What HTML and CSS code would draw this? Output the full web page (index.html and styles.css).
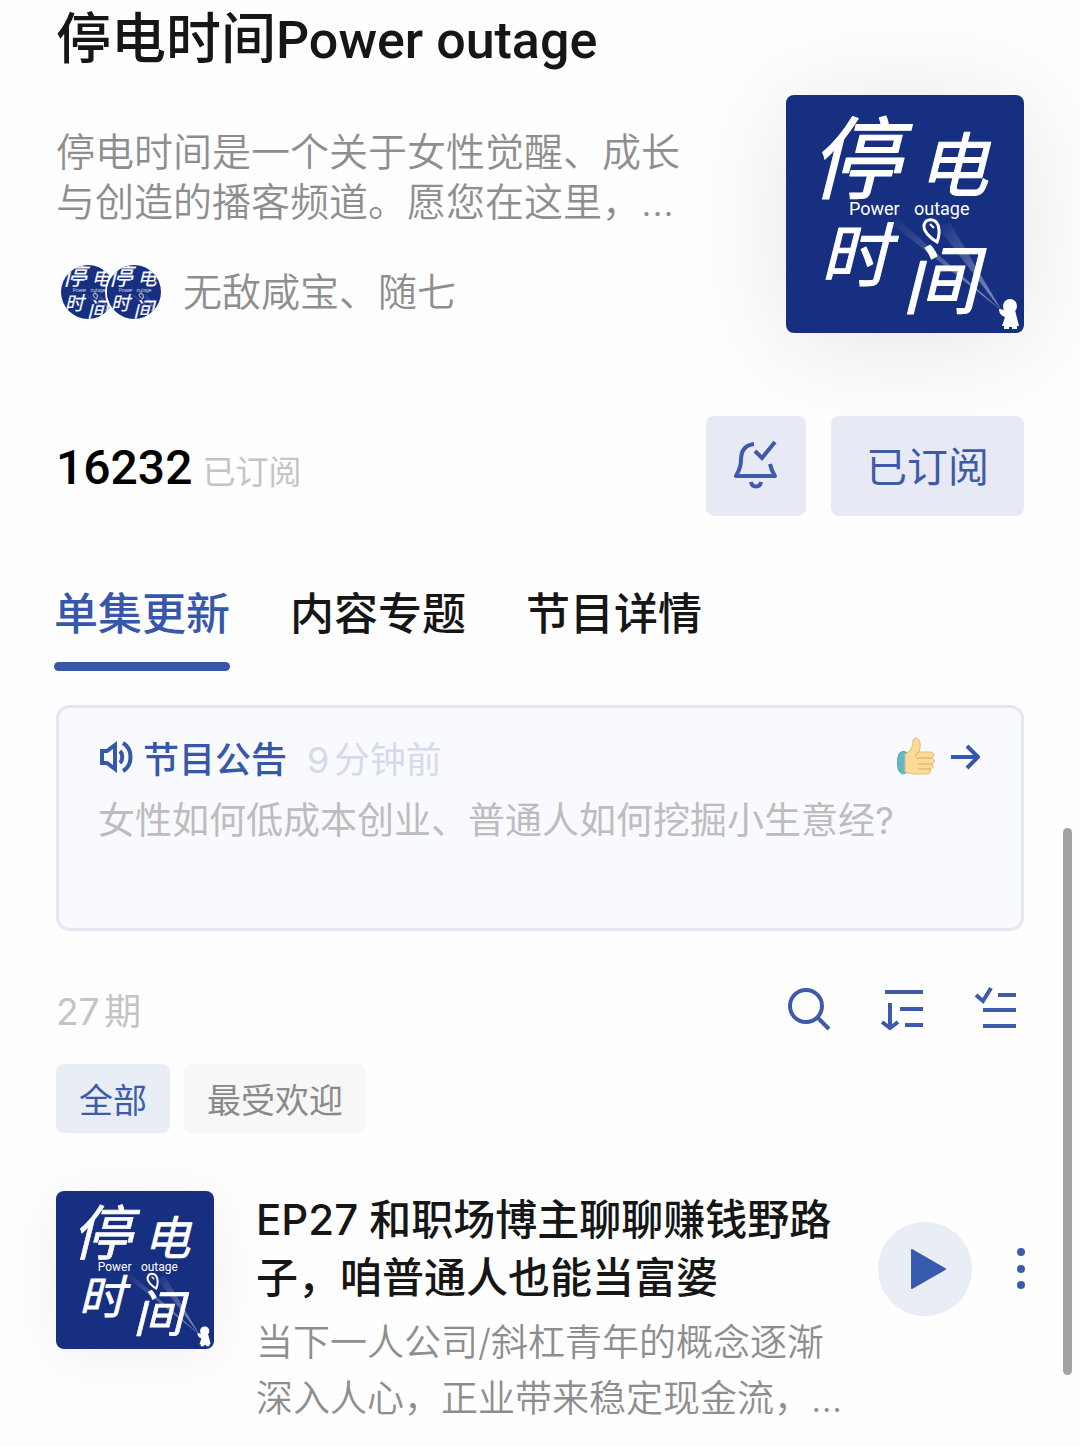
FILE: index.html
```
<!DOCTYPE html>
<html lang="zh-CN">
<head>
    <meta charset="UTF-8">
    <meta name="viewport" content="width=device-width, initial-scale=1.0">
    <title>停电时间Power outage</title>
    <link rel="stylesheet" href="styles.css">
</head>
<body>

<!-- Artwork shared by the cover, the avatars and the episode list -->
<svg class="defs" width="0" height="0" aria-hidden="true">
    <defs>
        <linearGradient id="beam-light" x1="1" y1="1" x2="0" y2="0">
            <stop offset="0" stop-color="#fff" stop-opacity="0.5"/>
            <stop offset="1" stop-color="#fff" stop-opacity="0"/>
        </linearGradient>
        <symbol id="artwork" viewBox="0 0 238 238">
            <rect width="238" height="238" fill="#172f80"/>
            <path d="M216 216L102 126L112 124Z" fill="url(#beam-light)"/>
            <path d="M216 216L150 130L164 128Z" fill="url(#beam-light)"/>
            <g class="art-text">
                <text x="24" y="97" font-size="90">停</text>
                <text x="132" y="96" font-size="70">电</text>
                <text x="34" y="186" font-size="70">时</text>
                <text x="116" y="213" font-size="76">间</text>
            </g>
            <g class="art-sub">
                <text x="63" y="120" font-size="18">Power</text>
                <text x="128" y="120" font-size="18">outage</text>
            </g>
            <path d="M151 147C144 143 137 136 138 130C140 123 149 123 152 130C154 136 153 142 151 147Z" fill="#172f80" stroke="#fff" stroke-width="3"/>
            <path d="M144 129L148 133" stroke="#fff" stroke-width="2"/>
            <circle cx="224" cy="211" r="7" fill="#fff"/>
            <path d="M219 215L213 214C213 219 216 221 219 222L216 231H218V234H223V232H226V234H231V231H233L229 215Z" fill="#fff"/>
        </symbol>
    </defs>
</svg>

<main class="page">
    <header class="podcast">
        <h1 class="podcast-title">停电时间<span>Power outage</span></h1>
        <div class="podcast-row">
            <div class="podcast-info">
                <p class="podcast-desc">停电时间是一个关于女性觉醒、成长<br>与创造的播客频道。愿您在这里，…</p>
                <div class="hosts">
                    <div class="avatars">
                        <svg class="avatar" viewBox="20 22 198 198"><use href="#artwork" width="238" height="238"/></svg>
                        <svg class="avatar" viewBox="20 22 198 198"><use href="#artwork" width="238" height="238"/></svg>
                    </div>
                    <span>无敌咸宝、随七</span>
                </div>
            </div>
            <svg class="cover" role="img" aria-label="停电时间"><use href="#artwork"/></svg>
        </div>
    </header>

    <section class="subscribe">
        <div class="count"><strong>16232</strong><span>已订阅</span></div>
        <button class="btn btn-bell" type="button" aria-label="更新提醒">
            <svg width="48" height="52" viewBox="0 0 48 52" fill="none" stroke="#3e5ba9" stroke-width="4">
                <path d="M22 4C13 5 9 11 9 20C9 28 6 32 4 36H43C41 33 39 29 38 24" stroke-linejoin="round"/>
                <path d="M23 11L30 18L43 2"/>
                <path d="M19 42C20 48 28 48 29 42"/>
            </svg>
        </button>
        <button class="btn btn-sub" type="button">已订阅</button>
    </section>

    <nav class="tabs">
        <a class="tab active" href="#">单集更新</a>
        <a class="tab" href="#">内容专题</a>
        <a class="tab" href="#">节目详情</a>
    </nav>

    <section class="notice">
        <div class="notice-head">
            <svg class="speaker" width="36" height="36" viewBox="0 0 36 36" fill="none" stroke="#3657ab" stroke-width="4">
                <path d="M4 12H9L17 6V30L9 24H4Z"/>
                <path d="M22 12C25 15 25 21 22 24"/>
                <path d="M25 4C35 10 35 26 25 32"/>
            </svg>
            <h2 class="notice-title">节目公告</h2>
            <span class="notice-time">9分钟前</span>
            <svg class="thumb" width="40" height="40" viewBox="0 0 40 40">
                <path d="M3 17C5 14 9 14 11 16V35C8 38 5 37 3 34C1 29 1 22 3 17Z" fill="#62b8c8" stroke="#4fa0b2"/>
                <path d="M9 17C14 15 17 10 17 4C17 1 21 0 23 3C25 7 24 11 23 15H34C38 15 39 19 36 21C39 22 39 26 36 27C38 29 37 32 34 32C35 35 34 37 30 37H18C14 37 11 35 9 35Z" fill="#fbdc97" stroke="#e2b873"/>
                <path d="M23 15C19 17 19 20 22 22M22 21H36M22 27H36M22 32H34" fill="none" stroke="#dda75c"/>
            </svg>
            <a class="notice-link" href="#" aria-label="查看公告">
                <svg width="32" height="28" viewBox="0 0 32 28" fill="none" stroke="#3657ab" stroke-width="4">
                    <path d="M1 14H28"/>
                    <path d="M17 3L28 14L17 25" stroke-linejoin="round"/>
                </svg>
            </a>
        </div>
        <p class="notice-text">女性如何低成本创业、普通人如何挖掘小生意经?</p>
    </section>

    <div class="toolbar">
        <span class="total">27期</span>
        <button class="icon-btn" type="button" aria-label="搜索">
            <svg width="48" height="48" viewBox="0 0 48 48" fill="none" stroke="#3e5ba9" stroke-width="4">
                <circle cx="22" cy="21" r="16"/>
                <path d="M33 32L45 44"/>
            </svg>
        </button>
        <button class="icon-btn" type="button" aria-label="排序">
            <svg width="48" height="48" viewBox="0 0 48 48" fill="none" stroke="#3e5ba9" stroke-width="4">
                <path d="M7 7H45M22 24H45M27 40H45"/>
                <path d="M12 18V43M4 37L12 43L20 37"/>
            </svg>
        </button>
        <button class="icon-btn" type="button" aria-label="批量选择">
            <svg width="48" height="48" viewBox="0 0 48 48" fill="none" stroke="#3e5ba9" stroke-width="4">
                <path d="M4 10L11 16L19 3"/>
                <path d="M26 10H44M11 25H44M11 41H44"/>
            </svg>
        </button>
    </div>

    <div class="filters">
        <button class="chip active" type="button">全部</button>
        <button class="chip" type="button">最受欢迎</button>
    </div>

    <article class="episode">
        <svg class="episode-cover" role="img" aria-label="停电时间"><use href="#artwork"/></svg>
        <div class="episode-body">
            <h3 class="episode-title">EP27 和职场博主聊聊赚钱野路<br>子，咱普通人也能当富婆</h3>
            <p class="episode-desc">当下一人公司/斜杠青年的概念逐渐<br>深入人心，正业带来稳定现金流，…</p>
        </div>
        <button class="play" type="button" aria-label="播放">
            <svg width="38" height="42" viewBox="0 0 38 42"><path d="M3 2L36 21L3 40Z" fill="#3759ae" stroke="#3759ae" stroke-width="2" stroke-linejoin="round"/></svg>
        </button>
        <button class="more" type="button" aria-label="更多">
            <svg width="10" height="42" viewBox="0 0 10 42" fill="#3e5ba9">
                <circle cx="5" cy="4" r="4"/>
                <circle cx="5" cy="21" r="4"/>
                <circle cx="5" cy="37" r="4"/>
            </svg>
        </button>
    </article>
</main>

<div class="scroll-thumb"></div>

</body>
</html>
```
FILE: styles.css
```
* {
    box-sizing: border-box;
}
body {
    margin: 0;
    background-color: #fefefe;
    color: #161616;
    font-family: Inter, "Noto Sans CJK SC", sans-serif;
    overflow-x: hidden;
}
h1, h2, h3, p {
    margin: 0;
    font-weight: 500;
}
button {
    padding: 0;
    border: none;
    background: none;
    font-family: inherit;
    cursor: pointer;
}
a {
    color: inherit;
    text-decoration: none;
}
svg {
    display: block;
}
.defs {
    position: absolute;
}
.page {
    padding: 0 56px 20px;
}

/* Artwork */
.art-text {
    fill: #fff;
    stroke: #fff;
    stroke-width: 1px;
    stroke-linejoin: round;
    font-family: "Noto Sans CJK SC", sans-serif;
    font-style: italic;
}
.art-sub {
    fill: #fff;
    font-family: Roboto, sans-serif;
}

/* Header */
.podcast-title {
    font-family: Roboto, "Noto Sans CJK SC", sans-serif;
    font-size: 55px;
    line-height: 78px;
    white-space: nowrap;
}
.podcast-title span {
    font-size: 52px;
}
.podcast-row {
    display: flex;
    justify-content: space-between;
    gap: 24px;
    margin-top: 15px;
}
.podcast-info {
    padding-top: 32px;
}
.podcast-desc {
    color: #8e8e8e;
    font-size: 39px;
    font-weight: 350;
    line-height: 50px;
    white-space: nowrap;
}
.hosts {
    display: flex;
    align-items: center;
    gap: 20px;
    margin-top: 36px;
    padding-left: 3px;
    color: #8e8e8e;
    font-size: 39px;
    font-weight: 350;
    line-height: 58px;
}
.avatars {
    display: flex;
}
.avatar {
    width: 58px;
    height: 58px;
    border: 2px solid #fefefe;
    border-radius: 50%;
}
.avatar + .avatar {
    margin-left: -12px;
}
.cover {
    flex: none;
    width: 238px;
    height: 238px;
    border-radius: 8px;
    box-shadow: 0 10px 110px rgba(0, 0, 0, 0.1);
}

/* Subscribe */
.subscribe {
    display: flex;
    gap: 25px;
    margin-top: 83px;
}
.count {
    display: flex;
    align-items: baseline;
    gap: 10px;
    margin-right: auto;
    line-height: 104px;
}
.count strong {
    color: #000;
    font-family: Roboto, sans-serif;
    font-size: 48px;
    font-weight: 500;
}
.count span {
    color: #c4c4c6;
    font-size: 33px;
}
.btn {
    display: flex;
    align-items: center;
    justify-content: center;
    height: 100px;
    border-radius: 8px;
    background-color: #e7eaf4;
    color: #3e5ba9;
    position: relative;
}
.btn-bell {
    width: 100px;
}
.btn-sub {
    padding: 0 35px 4px;
    font-size: 41px;
}

/* Tabs */
.tabs {
    display: flex;
    gap: 60px;
    margin-top: 60px;
    margin-left: -2px;
}
.tab {
    font-size: 44px;
    font-weight: 500;
    line-height: 60px;
}
.tab::after {
    content: "";
    display: block;
    height: 9px;
    margin-top: 18px;
    border-radius: 5px;
}
.tab.active {
    color: #3657ab;
}
.tab.active::after {
    background-color: #3657ab;
}

/* Notice */
.notice {
    min-height: 226px;
    margin-top: 34px;
    padding: 24px 39px;
    border: 3px solid #e5e7f2;
    border-radius: 14px;
    background-color: #f9fafd;
}
.notice-head {
    display: flex;
    align-items: center;
    height: 50px;
    font-size: 36px;
}
.notice-title {
    margin: 0 20px 0 9px;
    color: #3657ab;
    font-size: 36px;
}
.notice-time {
    margin-right: auto;
    color: #d6daec;
    text-autospace: normal;
}
.notice-link {
    margin-left: 14px;
}
.notice-text {
    margin-top: 14px;
    color: #bdbdbf;
    font-size: 37px;
    font-weight: 400;
    line-height: 50px;
    white-space: nowrap;
}

/* Toolbar */
.toolbar {
    display: flex;
    align-items: center;
    gap: 46px;
    height: 50px;
    margin-top: 53px;
    padding-right: 4px;
}
.total {
    margin-right: auto;
    color: #c4c4c6;
    font-size: 37px;
    text-autospace: normal;
}

/* Filters */
.filters {
    display: flex;
    gap: 14px;
    margin-top: 30px;
}
.chip {
    height: 69px;
    padding: 0 23px;
    border-radius: 8px;
    background-color: #f7f7f7;
    color: #8a8a8a;
    font-size: 34px;
}
.chip.active {
    background-color: #e9edf6;
    color: #3e5ba9;
}

/* Episode */
.episode {
    display: flex;
    align-items: flex-start;
    margin-top: 58px;
}
.episode-cover {
    flex: none;
    width: 158px;
    height: 158px;
    border-radius: 8px;
    box-shadow: 0 6px 60px rgba(0, 0, 0, 0.06);
}
.episode-body {
    flex: 1;
    margin-left: 42px;
    white-space: nowrap;
}
.episode-title {
    font-size: 42px;
    line-height: 58px;
}
.episode-desc {
    margin-top: 8px;
    color: #8e8e8e;
    font-size: 37px;
    font-weight: 350;
    line-height: 56px;
}
.play {
    display: flex;
    align-items: center;
    justify-content: center;
    width: 94px;
    height: 94px;
    margin-top: 31px;
    padding-left: 6px;
    border-radius: 50%;
    background-color: #e9edf6;
}
.more {
    margin: 57px -2px 0 44px;
}

.scroll-thumb {
    position: fixed;
    top: 828px;
    right: 8px;
    width: 9px;
    height: 547px;
    border-radius: 5px;
    background-color: #a3a3a3;
}
```
